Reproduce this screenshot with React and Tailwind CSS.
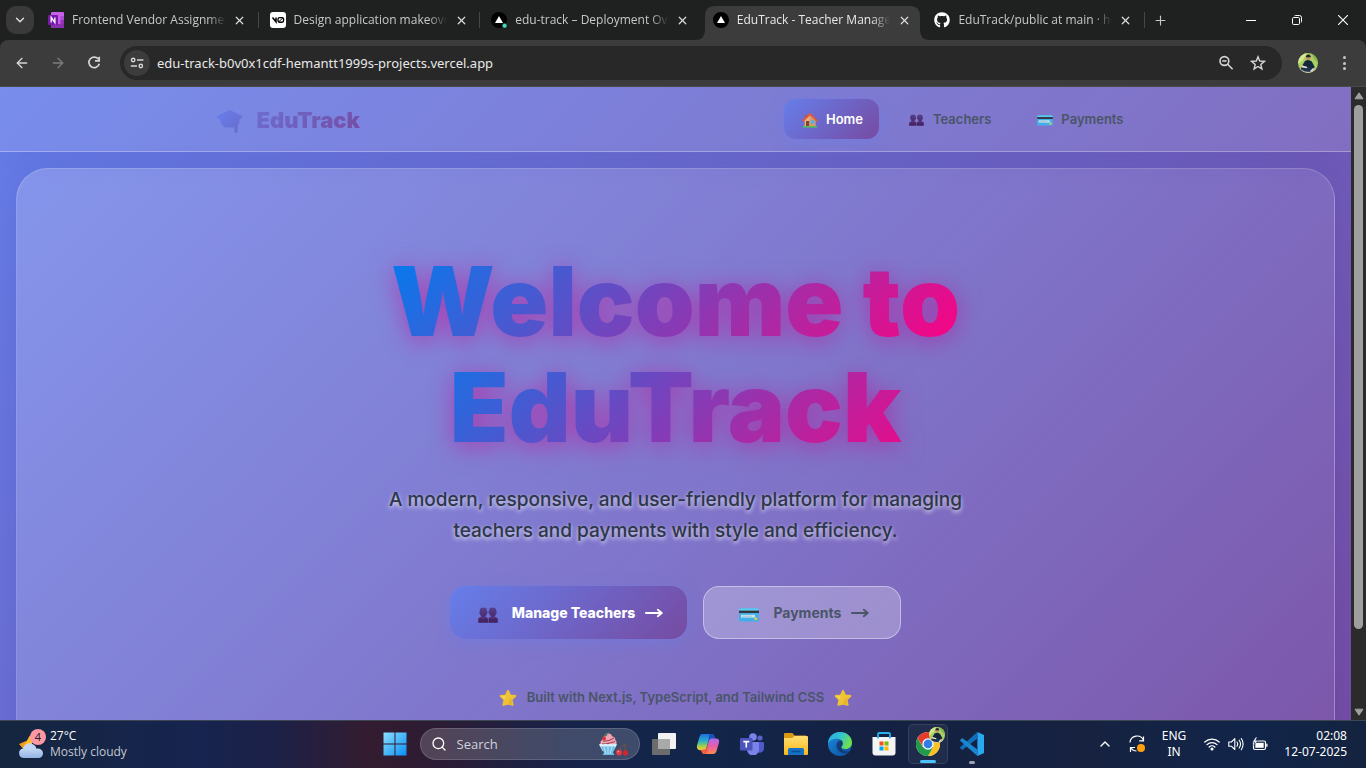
import React from "react";
import { FaGithub } from "react-icons/fa";
import { ArrowLeft, ArrowRight, ChevronDown, ChevronUp, Plus, X, Search } from "lucide-react";

/* ---------- page icons ---------- */

function CapIcon() {
  return (
    <svg viewBox="0 0 28 26" className="h-[26px] w-[28px]" aria-hidden="true">
      <defs>
        <linearGradient id="capFill" x1="0" y1="0" x2="1" y2="1">
          <stop offset="0" stopColor="#667eea" />
          <stop offset="1" stopColor="#6b6ccc" />
        </linearGradient>
      </defs>
      <path
        d="M13 1.2 Q13.8.8 14.6 1.2 L25.6 6.8 Q27 7.8 25.8 8.8 L23.6 10.2 Q24 14 21.8 16.6 V22.6 Q21.8 24 20 24 Q18.2 24 18.2 22.6 V18.4 H9 Q4.6 15.8 4 10.8 L1.4 9 Q.2 7.9 1.6 7 Z"
        fill="url(#capFill)"
      />
    </svg>
  );
}

function HouseIcon() {
  return (
    <svg viewBox="0 0 16 16" className="h-4 w-4" aria-hidden="true">
      <path d="M3 3h2.4v4H3z" fill="#9c5a48" />
      <path d="M2.6 7.5 8 3l5.4 4.5v7H2.6z" fill="#e8b184" />
      <path d="M7.6 3.4 13.4 8v6.5H7.6z" fill="#d79a70" />
      <path d="M1.2 8.6 8 2l6.8 6.6" fill="none" stroke="#e5583c" strokeWidth="2" strokeLinecap="round" strokeLinejoin="round" />
      <path d="M4 9h3.2v5.5H4z" fill="#7d4632" />
      <path d="M9 8.4h3.4v3.2H9z" fill="#3fb6ef" />
      <path d="M.8 14h14.4v1.6H.8z" fill="#55c057" />
    </svg>
  );
}

function PeopleIcon({ className }) {
  return (
    <svg viewBox="0 0 20 16" className={className} aria-hidden="true">
      <defs>
        <linearGradient id="bust" x1="0" y1="0" x2="0" y2="1">
          <stop offset="0" stopColor="#56408c" />
          <stop offset="1" stopColor="#43205f" />
        </linearGradient>
      </defs>
      <g fill="url(#bust)">
        <path d="M1.800 4.800C1.300 2 3 .6 5.400.6S9.500 2 9.100 4.800c.8.2.7 1.500-.2 1.900-.4 1.200-.9 1.800-1.400 2.300v1c1.600.3 2.500 1 2.500 2.600v3.100H.2v-3.100c0-1.600 1.200-2.300 3-2.600V9c-.5-.5-1-1.100-1.300-2.300-.9-.4-.9-1.700-.1-1.900z" />
        <path d="M10.900 4.800C10.500 2 12.200.6 14.600.6S18.700 2 18.300 4.800c.8.2.7 1.500-.2 1.900-.3 1.200-.8 1.800-1.400 2.300v1c1.800.3 3.100 1 3.100 2.600v3.100h-9.400v-3.100c0-1.600.9-2.300 2.500-2.600V9c-.6-.5-1.200-1.100-1.600-2.300-.9-.4-1.200-1.700-.4-1.900z" />
      </g>
      <path d="M3.400 10.200q2 1.600 3.700 0M12.900 10.200q2 1.600 3.600 0" fill="none" stroke="#6d3f94" strokeWidth=".8" />
    </svg>
  );
}

function CardIcon({ className }) {
  return (
    <svg viewBox="0 0 20 14" className={className} aria-hidden="true">
      <rect x="0" y=".5" width="20" height="13" rx="1.500" fill="#41b0ea" />
      <path d="M0 2A1.500 1.500 0 0 1 1.500.5h17A1.500 1.500 0 0 1 20 2v1H0z" fill="#59d0f0" />
      <rect x="0" y="2.600" width="20" height="2.400" fill="#35363f" />
      <rect x="2" y="6.800" width="14" height="2.800" fill="#cfe3ea" />
      <rect x="3" y="7.700" width="10" height="1" fill="#a8c4d4" />
      <rect x="15.600" y="9.600" width="2.600" height="2.400" rx=".6" fill="#f0c93a" />
    </svg>
  );
}

function StarEmoji() {
  return (
    <svg viewBox="0 0 18 18" className="h-[18px] w-[18px]" aria-hidden="true">
      <path
        d="M9 1.700 11.200 6.300 16.400 7 12.600 10.700 13.700 15.900 9 14.600 4.300 15.900 5.400 10.700 1.600 7 6.800 6.300z"
        fill="#f0c332"
        stroke="#f0c332"
        strokeWidth="1.800"
        strokeLinejoin="round"
      />
      <path d="M9 2 7 6.500 2 7.200 5.600 10.600z" fill="#f8d95a" opacity=".7" />
      <path d="M9 14.500 13.600 15.900 12.600 10.800 16 7.400 10.600 10.500z" fill="#e0a92c" opacity=".6" />
    </svg>
  );
}

function LongArrow() {
  return (
    <svg viewBox="0 0 18 12" className="h-3 w-[18px]" fill="none" stroke="currentColor" strokeWidth="1.800" aria-hidden="true">
      <path d="M.9 6h15.600M12.800 2.800 16.800 6l-4 3.200" strokeLinecap="round" strokeLinejoin="round" />
    </svg>
  );
}

/* ---------- browser icons ---------- */

function OneNoteIcon() {
  return (
    <svg viewBox="0 0 16 16" className="h-4 w-4" aria-hidden="true">
      <rect x="3" y="0" width="13" height="16" rx="1" fill="#c661e8" />
      <path d="M12.500 4H16v4h-3.500z" fill="#ae4bd5" />
      <path d="M12.500 8H16v4h-3.500z" fill="#9333b8" />
      <path d="M3 12h13v3a1 1 0 0 1-1 1H4a1 1 0 0 1-1-1z" fill="#8a2fb0" />
      <rect x="0" y="3" width="10" height="10" rx="1" fill="#7719aa" />
      <path d="M3.200 10.600V5.400l3.700 5.200V5.400" fill="none" stroke="#fff" strokeWidth="1.300" />
    </svg>
  );
}

function V0Icon() {
  return (
    <svg viewBox="0 0 16 16" className="h-4 w-4" aria-hidden="true">
      <rect width="16" height="16" rx="3" fill="#fff" />
      <path d="M2.500 5.500 6 9.800V5.500" fill="none" stroke="#000" strokeWidth="1.500" />
      <rect x="8" y="5.600" width="5.600" height="4.600" rx="1.600" fill="none" stroke="#000" strokeWidth="1.400" />
      <path d="M8.500 10 13 5.800" stroke="#000" strokeWidth="1" />
    </svg>
  );
}

function VercelIcon({ dot }) {
  return (
    <svg viewBox="0 0 16 16" className="h-4 w-4" aria-hidden="true">
      <circle cx="8" cy="8" r="8" fill="#000" />
      <path d="M8 4 12 11H4z" fill="#fff" />
      {dot && <circle cx="13.600" cy="13.700" r="2.400" fill="#45dcc0" stroke="#1f2120" strokeWidth=".6" />}
    </svg>
  );
}

function AvatarIcon({ className }) {
  return (
    <svg viewBox="0 0 20 20" className={className} aria-hidden="true">
      <defs>
        <clipPath id="avatarClip">
          <circle cx="10" cy="10" r="10" />
        </clipPath>
      </defs>
      <g clipPath="url(#avatarClip)">
        <rect width="20" height="20" fill="#a9cf66" />
        <path d="M0 0h9L5 7 0 11z" fill="#d5e88f" />
        <path d="M13 0h7v10l-4-4z" fill="#86b94a" />
        <path d="M0 15.500h20V20H0z" fill="#cfc9a0" />
        <circle cx="10.300" cy="4.800" r="2.200" fill="#c98e68" />
        <path d="M7.900 4.200q.2-2.800 2.500-2.800T12.800 4.200z" fill="#1c1f26" />
        <path d="M7 8q3.500-2.200 6.800.6l3 5.600-3.600 2-5.700-1L4 12.800z" fill="#15263a" />
        <path d="M2.800 14.600q6-1.400 13.600 1L13 19l-6-.6-4-1.800z" fill="#1d3350" />
        <path d="M3.800 12.300 9.500 14l-1 1.200-4.600-1z" fill="#f0dfcf" />
        <path d="M11.800 18.200 15.200 15l.8 1-2.800 3z" fill="#f3e9e0" />
      </g>
    </svg>
  );
}

function ReloadIcon() {
  return (
    <svg viewBox="0 0 16 16" className="h-4 w-4" fill="none" stroke="currentColor" strokeWidth="1.700" aria-hidden="true">
      <path d="M12.600 4.400A5.300 5.300 0 1 0 13.300 8.800" />
      <path d="M13.200 1.800v4.100H9" />
    </svg>
  );
}

function TuneIcon() {
  return (
    <svg viewBox="0 0 14 14" className="h-[14px] w-[14px]" fill="none" stroke="currentColor" strokeWidth="1.400" aria-hidden="true">
      <circle cx="3.200" cy="4" r="1.700" />
      <path d="M7 4h6.400M.8 10H7" />
      <circle cx="10.800" cy="10" r="1.700" />
    </svg>
  );
}

function ZoomOutIcon() {
  return (
    <svg viewBox="0 0 16 16" className="h-4 w-4" fill="none" stroke="currentColor" strokeWidth="1.600" aria-hidden="true">
      <circle cx="6.400" cy="6" r="4.400" />
      <path d="M9.700 9.300 14.600 14.200M4.200 6h4.400" />
    </svg>
  );
}

function StarOutline() {
  return (
    <svg viewBox="0 0 16 16" className="h-4 w-4" fill="none" stroke="currentColor" strokeWidth="1.400" aria-hidden="true">
      <path d="M8 1.800 9.700 6l4.700.4-3.600 3 1.100 4.500L8 11.500l-3.900 2.400 1.100-4.500-3.600-3L6.300 6z" />
    </svg>
  );
}

/* ---------- taskbar icons ---------- */

function WeatherIcon() {
  return (
    <svg viewBox="0 0 28 28" className="h-7 w-7" aria-hidden="true">
      <defs>
        <linearGradient id="cloud" x1="0" y1="0" x2="0" y2="1">
          <stop offset="0" stopColor="#dbe8fb" />
          <stop offset="1" stopColor="#94b4e4" />
        </linearGradient>
      </defs>
      <path d="M12 5l-1.500 5L1 14l3.500 4h9V9z" fill="#f39a1e" />
      <path d="M11.500 6 5 18h9V9z" fill="#fbbd2e" />
      <path d="M5.500 28A4.800 4.800 0 0 1 5 18.500C6.500 14.800 10 13 13 13.800c3 .6 4.600 2.500 5.200 4.700 4-.2 6.800 1.600 6.800 5 0 2.600-2 4.500-4.600 4.500z" fill="url(#cloud)" />
      <path d="M5 18.500c1.500-3.700 5-5.500 8-4.700 3 .6 4.600 2.500 5.200 4.700-3-.2-5 .9-6 2.700-1.800-2.300-4.400-2.800-7.200-2.700z" fill="#c2d5f5" />
    </svg>
  );
}

function StartIcon() {
  return (
    <svg viewBox="0 0 24 24" className="h-6 w-6" aria-hidden="true">
      <defs>
        <linearGradient id="win" x1="0" y1="0" x2="1" y2="1">
          <stop offset="0" stopColor="#8be0ff" />
          <stop offset="1" stopColor="#0a8df5" />
        </linearGradient>
      </defs>
      <path d="M.5.5h11v11H.5zM12.500.5h11v11h-11zM.5 12.500h11v11H.5zM12.500 12.500h11v11h-11z" fill="url(#win)" />
    </svg>
  );
}

function SundaeIcon() {
  return (
    <svg viewBox="0 0 30 24" className="h-6 w-[30px]" aria-hidden="true">
      <path d="M9.500 1.500q3 0 3.500 2.700 3.500.6 3.300 3.800 2.200 1.600.7 5H2q-1.800-3.600 1.500-5.200Q3.800 4.500 7.500 4q0-1.500 2-2.500z" fill="#f3a4b2" />
      <path d="M4 9q6 .5 11-3M3 12q7 0 13-2.500" stroke="#a3505c" strokeWidth="1.200" fill="none" />
      <circle cx="5" cy="6.500" r="2" fill="#e0343e" />
      <path d="M5 5Q5.500 2 10 1" stroke="#6ea052" fill="none" />
      <path d="M0 12.500q2-1.500 4 0 2.500-1.500 5 0 2.500-1.500 5 0 2-1.500 4 0L14.500 19H3.500z" fill="#d8f0fa" />
      <path d="M1.500 14.500h15L14 20.500l1.500 2.500h-12L5 20.500z" fill="#6fbde4" />
      <path d="M5 15l2 7M9 15v7M13 15l-2 7" stroke="#b9e4f6" fill="none" />
      <path d="M20 19.500Q22 14 26.500 11.500 25 16 26.500 19.500" stroke="#7a5038" fill="none" />
      <circle cx="20" cy="20.500" r="2.900" fill="#e23b42" />
      <circle cx="26.500" cy="21" r="2.700" fill="#cc2832" />
      <circle cx="19.200" cy="19.600" r=".8" fill="#ff9da0" />
    </svg>
  );
}

function TaskViewIcon() {
  return (
    <svg viewBox="0 0 24 22" className="h-[22px] w-6" aria-hidden="true">
      <rect x="6" y="0" width="18" height="16" rx="1" fill="#f2f2f2" />
      <rect x="0" y="6" width="18" height="16" rx="1" fill="#6c6c6c" />
      <path d="M6 6h12v10H6z" fill="#a9a9a9" />
    </svg>
  );
}

function CopilotIcon() {
  return (
    <svg viewBox="0 0 24 22" className="h-[22px] w-6" aria-hidden="true">
      <defs>
        <linearGradient id="copA" x1="0" y1="0" x2="0" y2="1">
          <stop offset="0" stopColor="#1e6fe0" />
          <stop offset=".45" stopColor="#2bb3c5" />
          <stop offset=".75" stopColor="#9ed04e" />
          <stop offset="1" stopColor="#ffcb2e" />
        </linearGradient>
        <linearGradient id="copB" x1="0" y1="0" x2="0" y2="1">
          <stop offset="0" stopColor="#a96cf2" />
          <stop offset=".5" stopColor="#e95da6" />
          <stop offset="1" stopColor="#ff8a50" />
        </linearGradient>
      </defs>
      <path d="M6.500 1h9q2 0 2.600 2l.8 2.600h-3.600q-2 0-2.600 2l-2.400 7.600q-.6 2-2.600 2H4Q.2 17 1 12.600L3.600 3.400Q4.400 1 6.500 1z" fill="url(#copA)" />
      <path d="M13.500 1h2q2 0 2.600 2l.8 2.600h-3.600q-2 0-2.600 2L12 9z" fill="#1b4fc0" />
      <path d="M17.500 21h-9q-2 0-2.600-2L5.200 16.800h3q2 0 2.600-2L13 7.400q.6-2 2.600-2H20q3.800 0 3 4.200l-2.600 9Q19.600 21 17.500 21z" fill="url(#copB)" />
      <path d="M5.200 16.800h3q2 0 2.600-2L12 11l-.6 8-1.400 2H8.500q-2 0-2.600-2z" fill="#f1603c" />
    </svg>
  );
}

function TeamsIcon() {
  return (
    <svg viewBox="0 0 24 22" className="h-[22px] w-6" aria-hidden="true">
      <circle cx="20" cy="5" r="2.600" fill="#5b62c7" />
      <path d="M16 9h7q1 0 1 1v5.500a4.500 4.500 0 0 1-7 3.500z" fill="#5059c9" />
      <circle cx="13" cy="4" r="3.800" fill="#7b83eb" />
      <path d="M7 9h11q1 0 1 1v6.500a5.500 5.500 0 0 1-12 0z" fill="#7b83eb" />
      <rect x="0" y="5" width="12.500" height="12.500" rx="1.200" fill="#4b53bc" />
      <path d="M3.300 8.600h6M6.300 8.600v6" stroke="#fff" strokeWidth="1.600" />
    </svg>
  );
}

function FolderIcon() {
  return (
    <svg viewBox="0 0 24 22" className="h-[22px] w-6" aria-hidden="true">
      <defs>
        <linearGradient id="fold" x1="0" y1="0" x2="0" y2="1">
          <stop offset="0" stopColor="#ffdf70" />
          <stop offset="1" stopColor="#f9b71c" />
        </linearGradient>
      </defs>
      <path d="M1 0h7.500l2 2.500H22V6H0V1q0-1 1-1z" fill="#d99a12" />
      <path d="M0 5h8l2.500-2H23q1 0 1 1v17q0 1-1 1H1q-1 0-1-1z" fill="url(#fold)" />
      <path d="M4 22v-5.500q0-1.500 1.500-1.500h13q1.500 0 1.500 1.500V22z" fill="#1571c4" />
      <path d="M8 18.500h8" stroke="#0a4f96" strokeWidth="1.500" strokeLinecap="round" />
    </svg>
  );
}

function EdgeIcon() {
  return (
    <svg viewBox="0 0 24 24" className="h-6 w-6" aria-hidden="true">
      <defs>
        <linearGradient id="edgeTop" x1="0" y1="0" x2="1" y2=".4">
          <stop offset="0" stopColor="#27a9e6" />
          <stop offset=".55" stopColor="#34c3cf" />
          <stop offset="1" stopColor="#6fe04d" />
        </linearGradient>
        <linearGradient id="edgeLow" x1="0" y1="0" x2="1" y2="1">
          <stop offset="0" stopColor="#1b8de0" />
          <stop offset="1" stopColor="#0c4a9a" />
        </linearGradient>
      </defs>
      <circle cx="12" cy="12" r="12" fill="url(#edgeLow)" />
      <path d="M0 12C0 5 5 0 12 0s12 5 12 10.500c0 4-3 6.500-6.500 6.500-2.600 0-4.200-.9-4.200-2 0-.8 1.500-1.300 1.500-3.600 0-2.600-2.600-4.600-5.800-4.600C4.500 6.800 1 8.500 0 12z" fill="url(#edgeTop)" />
      <path d="M8.500 13.500c0 5 4.500 8 9 7.400 1.700-.3 3-1 4.200-2-2 1.400-8.400.9-8.400-3.900 0-.8 1.500-1.300 1.500-3.600 0-1.200-.7-2.300-1.700-3.100-2.500 0-4.600 2.400-4.600 5.200z" fill="#14335f" opacity=".8" />
    </svg>
  );
}

function StoreIcon() {
  return (
    <svg viewBox="0 0 24 24" className="h-6 w-6" aria-hidden="true">
      <path d="M.5 5h23v15.500q0 3-3 3h-17q-3 0-3-3z" fill="#f4f4f4" />
      <path d="M6 6.500V2.200q0-1.200 1.200-1.200h9.600q1.200 0 1.200 1.200v4.300" fill="none" stroke="#2cb0ea" strokeWidth="1.800" />
      <path d="M7.500 9.500h4v4h-4z" fill="#f25022" />
      <path d="M12.500 9.500h4v4h-4z" fill="#7fba00" />
      <path d="M7.500 14.500h4v4h-4z" fill="#00a4ef" />
      <path d="M12.500 14.500h4v4h-4z" fill="#ffb900" />
    </svg>
  );
}

function ChromeIcon() {
  return (
    <svg viewBox="0 0 24 24" className="h-6 w-6" aria-hidden="true">
      <circle cx="12" cy="12" r="12" fill="#fff" />
      <path d="M12 12 1.600 6A12 12 0 0 1 22.400 6z" fill="#e33b2e" />
      <path d="M12 12 22.400 6A12 12 0 0 1 12 24L17.200 15z" fill="#fcc31e" />
      <path d="M12 12 17.200 15 12 24A12 12 0 0 1 1.600 6L6.800 15z" fill="#219a4b" />
      <path d="M12 6.500h10.600L22.400 6H1.600L7 15z" fill="#e33b2e" />
      <circle cx="12" cy="12" r="5.700" fill="#fff" />
      <circle cx="12" cy="12" r="4.400" fill="#2f7de8" />
    </svg>
  );
}

function VSCodeIcon() {
  return (
    <svg viewBox="0 0 24 24" className="h-6 w-6" aria-hidden="true">
      <path d="M17.400 0 24 2.900v18.200L17.400 24z" fill="#2aa9f3" />
      <path d="M17.400 0V6.400L3 17.400q-.6.500-1.200 0L.4 16.200q-.7-.7 0-1.300z" fill="#0f6fb9" />
      <path d="M17.400 24V17.600L3 6.600q-.6-.5-1.200 0L.4 7.800q-.7.700 0 1.300z" fill="#1b86cf" />
    </svg>
  );
}

function UpdateIcon() {
  return (
    <svg viewBox="0 0 18 18" className="h-[18px] w-[18px]" fill="none" stroke="#fff" strokeWidth="1.200" aria-hidden="true">
      <path d="M2 7.500A7 7 0 0 1 15.500 5.500M15.500 1.500v4.300h-4.300M2.500 17v-4.500H7M3 13q2 3 5.500 3" />
      <circle cx="13" cy="13" r="4" fill="#ff9f0f" stroke="none" />
    </svg>
  );
}

function WifiIcon() {
  return (
    <svg viewBox="0 0 16 14" className="h-[14px] w-4" fill="none" stroke="#fff" strokeWidth="1.300" strokeLinecap="round" aria-hidden="true">
      <path d="M.8 5a10.500 10.500 0 0 1 14.400 0M3 7.600a7.200 7.200 0 0 1 10 0M5.200 10a4 4 0 0 1 5.600 0" />
      <circle cx="8" cy="12" r=".9" fill="#fff" />
    </svg>
  );
}

function SpeakerIcon() {
  return (
    <svg viewBox="0 0 16 14" className="h-[14px] w-4" fill="none" stroke="#fff" strokeWidth="1.100" strokeLinecap="round" strokeLinejoin="round" aria-hidden="true">
      <path d="M.8 5v4.200h2.600L6.800 12.500V1.600L3.400 5z" />
      <path d="M9 5q1.400 2 0 4.200M11.200 3.200q2.700 3.800 0 7.800M13.300 1.500q3.600 5.500 0 11.200" />
    </svg>
  );
}

function BatteryIcon() {
  return (
    <svg viewBox="0 0 16 14" className="h-[14px] w-4" aria-hidden="true">
      <rect x="1.500" y="4" width="12" height="8.500" rx="1.500" fill="none" stroke="#fff" strokeWidth="1.200" />
      <rect x="3.300" y="5.800" width="8.400" height="5" fill="#fff" />
      <path d="M14.200 6.700h1.300v3h-1.300z" fill="#fff" />
      <path d="M3.800 0 .4 5.200h2.400L1.800 8.600 6 3.800H3.600L5.200 0z" fill="#fff" stroke="#14244a" strokeWidth=".5" />
    </svg>
  );
}

/* ---------- browser chrome ---------- */

const TABS = [
  { title: "Frontend Vendor Assignment", icon: <OneNoteIcon />, line: true },
  { title: "Design application makeover", icon: <V0Icon />, line: true },
  { title: "edu-track – Deployment Overview", icon: <VercelIcon dot /> },
  { title: "EduTrack - Teacher Management", icon: <VercelIcon />, active: true },
  { title: "EduTrack/public at main · hemantt1999", icon: <FaGithub className="h-4 w-4 text-white" />, line: true },
];

function Tab({ tab }) {
  return (
    <div className="relative flex h-full min-w-0 flex-1 items-center">
      {tab.active && (
        <svg viewBox="0 0 235 34" preserveAspectRatio="none" className="absolute bottom-0 -left-[10px] h-[34px] w-[235px]" aria-hidden="true">
          <path d="M0 34Q10 34 10 24V10Q10 0 20 0H215Q225 0 225 10V24Q225 34 235 34z" fill="#3c3c3c" />
        </svg>
      )}
      <button className="relative flex h-7 min-w-0 flex-1 items-center gap-2 pl-2 text-left">
        <span className="shrink-0">{tab.icon}</span>
        <span
          className={`h-4 min-w-0 flex-1 overflow-hidden font-['Open_Sans',sans-serif] text-[12px] leading-4 whitespace-nowrap [mask-image:linear-gradient(to_right,#000_88%,transparent)] ${
            tab.active ? "text-[#e8e8e8]" : "text-[#c7c7c7]"
          }`}
        >
          {tab.title}
        </span>
      </button>
      <button aria-label="Close tab" className="relative mr-[10px] ml-[6px] flex h-4 w-4 items-center justify-center text-[#dcdcdc]">
        <X size={13} strokeWidth={2.2} />
      </button>
      <span className={`relative mr-[3px] h-4 w-px ${tab.line ? "bg-[#454746]" : ""}`} />
    </div>
  );
}

function TabStrip() {
  return (
    <div className="flex h-10 items-center bg-[#1f2120] text-[#e3e3e3]">
      <button aria-label="Search tabs" className="ml-[6px] flex h-7 w-7 items-center justify-center rounded-[10px] bg-[#3a3a3a]">
        <ChevronDown size={14} strokeWidth={2.4} />
      </button>
      <div className="ml-[6px] flex h-full max-w-[1108px] min-w-0 flex-1">
        {TABS.map((tab) => (
          <Tab key={tab.title} tab={tab} />
        ))}
      </div>
      <button aria-label="New tab" className="ml-[2px] flex h-5 w-5 items-center justify-center text-[#c7c7c7]">
        <Plus size={15} strokeWidth={1.8} />
      </button>
      <div className="ml-auto flex h-full shrink-0 text-white">
        <button aria-label="Minimize" className="flex w-[46px] items-center justify-center">
          <span className="h-px w-[10px] bg-white" />
        </button>
        <button aria-label="Restore" className="flex w-[46px] items-center justify-center">
          <svg viewBox="0 0 10 10" className="h-[10px] w-[10px]" fill="none" stroke="currentColor" aria-hidden="true">
            <rect x=".5" y="2.500" width="7" height="7" rx="1.200" />
            <path d="M2.500.8Q3 .5 3.500.5h4q2 0 2 2v4q0 .6-.3 1" />
          </svg>
        </button>
        <button aria-label="Close window" className="flex w-[46px] items-center justify-center">
          <svg viewBox="0 0 10 10" className="h-[10px] w-[10px]" fill="none" stroke="currentColor" strokeWidth="1.100" aria-hidden="true">
            <path d="M0 0 10 10M10 0 0 10" />
          </svg>
        </button>
      </div>
    </div>
  );
}

function Toolbar() {
  return (
    <div className="bg-[#1f2120]">
      <div className="flex h-[47px] items-center rounded-t-[8px] border-b border-[#4a4a4a] bg-[#3c3c3c] pr-[14px] pl-[14px] text-[#d6d6d6]">
        <button aria-label="Back" className="flex h-4 w-4 items-center justify-center">
          <ArrowLeft size={16} strokeWidth={2} />
        </button>
        <button aria-label="Forward" className="ml-5 flex h-4 w-4 items-center justify-center text-[#7d7d7d]">
          <ArrowRight size={16} strokeWidth={2} />
        </button>
        <button aria-label="Reload" className="ml-5 flex h-4 w-4 items-center justify-center">
          <ReloadIcon />
        </button>
        <div className="ml-[18px] flex h-[34px] min-w-0 flex-1 items-center rounded-full bg-[#282828] pr-4 pl-1">
          <button aria-label="Site information" className="flex h-[26px] w-[26px] items-center justify-center rounded-full bg-[#3c3c3c]">
            <TuneIcon />
          </button>
          <input
            aria-label="Address"
            defaultValue="edu-track-b0v0x1cdf-hemantt1999s-projects.vercel.app"
            className="ml-[7px] min-w-0 flex-1 bg-transparent text-[13px] leading-5 text-[#e8e8e8] outline-none"
          />
          <button aria-label="Zoom" className="flex h-4 w-4 items-center justify-center">
            <ZoomOutIcon />
          </button>
          <button aria-label="Bookmark" className="ml-4 flex h-4 w-4 items-center justify-center">
            <StarOutline />
          </button>
        </div>
        <button aria-label="Profile" className="ml-4 h-5 w-5">
          <AvatarIcon className="h-5 w-5" />
        </button>
        <button aria-label="Menu" className="ml-[18px] flex h-4 w-4 flex-col items-center justify-between py-px">
          <span className="h-[3px] w-[3px] rounded-full bg-[#c7c7c7]" />
          <span className="h-[3px] w-[3px] rounded-full bg-[#c7c7c7]" />
          <span className="h-[3px] w-[3px] rounded-full bg-[#c7c7c7]" />
        </button>
      </div>
    </div>
  );
}

/* ---------- EduTrack page ---------- */

function NavLink({ icon, label, active }) {
  return (
    <a
      href="#"
      className={`flex h-10 items-center gap-[6px] rounded-[12px] px-4 text-[13px] leading-5 font-semibold ${
        active
          ? "bg-[linear-gradient(135deg,#667eea,#764ba2)] text-white shadow-[0_4px_15px_rgba(102,126,234,0.4)]"
          : "text-[#4a5568]"
      }`}
    >
      <span className="flex w-5 justify-center pt-[2px]">{icon}</span>
      {label}
    </a>
  );
}

function HeadingLine({ children }) {
  return (
    <span className="block bg-[linear-gradient(135deg,#007cf0,#ff0080)] bg-clip-text text-transparent">{children}</span>
  );
}

function Page() {
  return (
    <div className="min-h-[726px] min-w-0 flex-1 bg-[linear-gradient(135deg,#667eea,#764ba2)] font-['Inter',sans-serif]">
      <header className="border-b border-white/30 bg-white/12 shadow-[0_8px_32px_rgba(31,38,135,0.08)]">
        <div className="mx-auto flex h-16 max-w-[1024px] items-center justify-between px-12">
          <a href="#" className="flex items-center gap-[13px] pl-1">
            <span className="pt-[6px]">
              <CapIcon />
            </span>
            <span className="bg-[linear-gradient(135deg,#6c6fd2,#764ba2)] bg-clip-text pt-px text-[22px] leading-8 font-black text-transparent">
              EduTrack
            </span>
          </a>
          <nav className="flex gap-3">
            <NavLink active icon={<HouseIcon />} label="Home" />
            <NavLink icon={<PeopleIcon className="h-3 w-[15px]" />} label="Teachers" />
            <NavLink icon={<CardIcon className="h-[11px] w-4" />} label="Payments" />
          </nav>
        </div>
      </header>

      <main className="p-4">
        <section className="flex flex-col items-center rounded-[32px] border border-white/20 bg-[linear-gradient(135deg,rgba(255,255,255,0.2),rgba(255,255,255,0.05))] px-4 py-[79px] text-center shadow-[0_8px_32px_rgba(31,38,135,0.15)]">
          <h1 className="text-[96px] leading-[106px] font-black drop-shadow-[0_4px_12px_rgba(200,0,145,0.5)]">
            <HeadingLine>Welcome to</HeadingLine>
            <HeadingLine>EduTrack</HeadingLine>
          </h1>
          <p className="mt-6 max-w-[614px] text-[19px] leading-[31px] font-medium text-[#2d3748] [text-shadow:0_2px_4px_rgba(255,255,255,0.8)]">
            A modern, responsive, and user-friendly platform for managing teachers and payments with style and efficiency.
          </p>
          <div className="mt-10 flex gap-4">
            <a
              href="#"
              className="flex h-[53px] items-center gap-[10px] rounded-[16px] bg-[linear-gradient(135deg,#667eea,#764ba2)] px-6 text-[14px] font-extrabold text-white shadow-[0_4px_15px_rgba(102,126,234,0.4)]"
            >
              <span className="flex w-7 justify-center pt-1">
                <PeopleIcon className="h-4 w-5" />
              </span>
              <span>Manage Teachers</span>
              <LongArrow />
            </a>
            <a
              href="#"
              className="flex h-[53px] items-center gap-[10px] rounded-[16px] border border-white/40 bg-white/25 px-[31px] text-[14px] font-bold text-[#4a5568]"
            >
              <span className="flex w-7 justify-center pt-1">
                <CardIcon className="h-[14px] w-5" />
              </span>
              <span>Payments</span>
              <LongArrow />
            </a>
          </div>
          <div className="mt-[49px] flex h-5 items-center gap-[10px] text-[13px] font-semibold text-[#4a5568]">
            <StarEmoji />
            <span>Built with Next.js, TypeScript, and Tailwind CSS</span>
            <StarEmoji />
          </div>
        </section>
      </main>
    </div>
  );
}

function Scrollbar() {
  return (
    <div className="flex w-[15px] shrink-0 flex-col items-center bg-[#2b2b2b] py-1" aria-hidden="true">
      <svg viewBox="0 0 10 8" className="mt-px h-2 w-[10px]">
        <path d="M5 .8 9 6.800H1z" fill="#9f9f9f" stroke="#9f9f9f" strokeLinejoin="round" />
      </svg>
      <div className="mt-[5px] w-[9px] flex-[86] rounded-full bg-[#9f9f9f]" />
      <div className="flex-[13]" />
      <svg viewBox="0 0 10 8" className="h-2 w-[10px]">
        <path d="M5 7.200 9 1.200H1z" fill="#9f9f9f" stroke="#9f9f9f" strokeLinejoin="round" />
      </svg>
    </div>
  );
}

/* ---------- taskbar ---------- */

function TaskButton({ label, children }) {
  return (
    <button aria-label={label} className="flex h-10 w-11 items-center justify-center">
      {children}
    </button>
  );
}

function Taskbar() {
  return (
    <footer className="grid h-12 shrink-0 grid-cols-[1fr_auto_1fr] items-center bg-[linear-gradient(90deg,#15263f_0%,#16244f_14%,#1c2148_20%,#331c30_27%,#2c1c34_32%,#16234a_42%,#12264a_52%,#152142_65%,#162240_80%,#11254a_92%,#14233f_100%)] text-white shadow-[inset_0_1px_#3d4653]">
      <button className="flex items-center text-left">
        <span className="relative ml-[18px] h-7 w-7">
          <WeatherIcon />
          <span className="absolute -top-px left-3 flex h-4 w-4 items-center justify-center rounded-full bg-[#ff98a3] text-[11px] leading-4 text-[#22242c]">
            4
          </span>
        </span>
        <span className="ml-1 flex flex-col font-['Open_Sans',sans-serif] text-[12px] leading-4">
          <span>27°C</span>
          <span className="text-[#c3c8d0]">Mostly cloudy</span>
        </span>
      </button>

      <div className="flex items-center pl-1">
        <button aria-label="Start" className="flex h-10 w-9 items-center justify-center">
          <StartIcon />
        </button>
        <label className="ml-[7px] flex h-8 w-[220px] items-center rounded-full border border-white/15 bg-white/18 pr-[10px] pl-[10px]">
          <Search size={16} strokeWidth={2} className="shrink-0" />
          <input
            aria-label="Search"
            placeholder="Search"
            className="ml-[10px] min-w-0 flex-1 bg-transparent font-['Open_Sans',sans-serif] text-[13px] leading-5 outline-none placeholder:text-[#d0d2da]"
          />
          <SundaeIcon />
        </label>
        <div className="ml-[2px] flex">
          <TaskButton label="Task view"><TaskViewIcon /></TaskButton>
          <TaskButton label="Copilot"><CopilotIcon /></TaskButton>
          <TaskButton label="Teams"><TeamsIcon /></TaskButton>
          <TaskButton label="File Explorer"><FolderIcon /></TaskButton>
          <TaskButton label="Edge"><EdgeIcon /></TaskButton>
          <TaskButton label="Microsoft Store"><StoreIcon /></TaskButton>
          <button aria-label="Chrome" className="relative mx-[2px] flex h-10 w-10 items-center justify-center rounded-[5px] border border-white/10 bg-white/5">
            <ChromeIcon />
            <span className="absolute top-[2px] right-[2px]">
              <AvatarIcon className="h-4 w-4" />
            </span>
            <span className="absolute bottom-0 h-[3px] w-4 rounded-full bg-[#4cc2ff]" />
          </button>
          <button aria-label="Visual Studio Code" className="relative flex h-10 w-11 items-center justify-center">
            <VSCodeIcon />
            <span className="absolute bottom-0 h-[3px] w-[6px] rounded-full bg-[#9da3ae]" />
          </button>
        </div>
      </div>

      <div className="flex items-center justify-end pr-[19px] text-[12px] leading-4">
        <button aria-label="Show hidden icons" className="flex h-4 w-4 items-center justify-center">
          <ChevronUp size={16} strokeWidth={2} />
        </button>
        <button aria-label="Updates" className="ml-[15px]">
          <UpdateIcon />
        </button>
        <button className="ml-[16px] text-center">
          ENG
          <br />
          IN
        </button>
        <button aria-label="Network, sound and battery" className="ml-[18px] flex items-center gap-2">
          <WifiIcon />
          <SpeakerIcon />
          <BatteryIcon />
        </button>
        <button className="ml-[16px] text-right">
          02:08
          <br />
          12-07-2025
        </button>
      </div>
    </footer>
  );
}

export default function App() {
  return (
    <div className="flex h-screen flex-col overflow-hidden font-['Noto_Sans',sans-serif]">
      <TabStrip />
      <Toolbar />
      <div className="flex min-h-0 flex-1 overflow-hidden">
        <div className="flex min-w-0 flex-1 items-start overflow-hidden">
          <Page />
        </div>
        <Scrollbar />
      </div>
      <Taskbar />
    </div>
  );
}
